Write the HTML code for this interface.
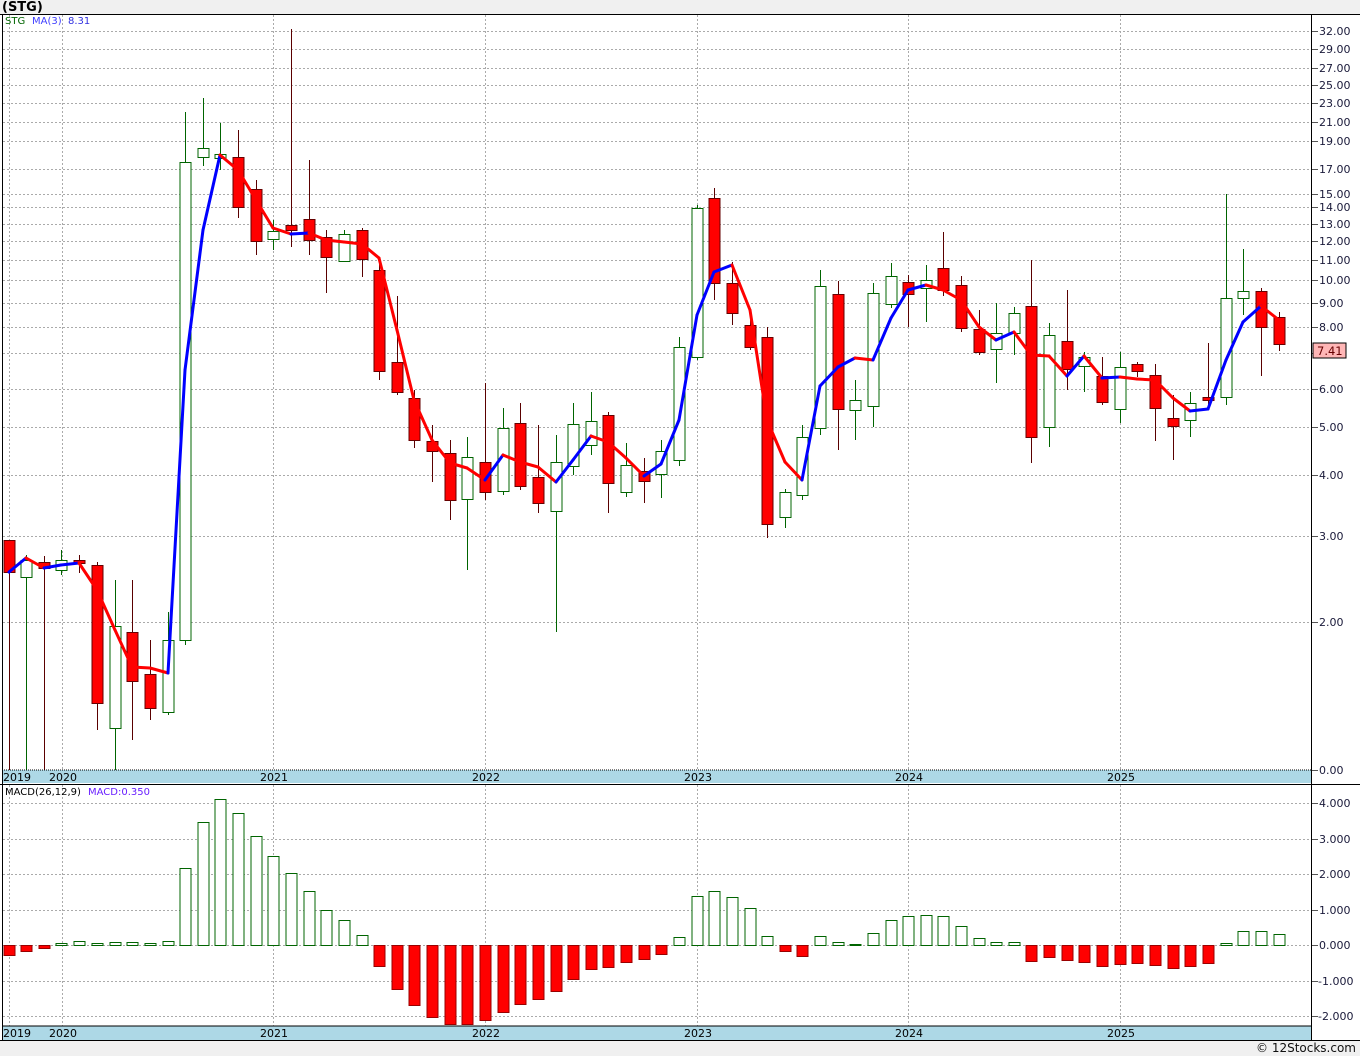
<!DOCTYPE html><html><head><meta charset="utf-8"><style>
body{margin:0;width:1360px;height:1056px;background:#f0f0f0;overflow:hidden;font-family:"Liberation Sans","DejaVu Sans",sans-serif}
svg{position:absolute;left:0;top:0}
text{font-family:"DejaVu Sans","Liberation Sans",sans-serif;font-size:11px}
</style></head><body>
<svg id="s" width="1360" height="1056" xmlns="http://www.w3.org/2000/svg">
<rect x="0" y="14" width="1360" height="1026" fill="#fff"/>
<text x="2" y="11" style="font-size:13px;font-weight:bold" fill="#000">(STG)</text>
<g id="grid" stroke="#aaa" stroke-dasharray="2,2" stroke-width="1"></g>
<g id="candles"></g>
<g id="ma"></g>
<g id="macd"></g>
<rect x="2" y="770" width="1309" height="13" fill="#add8e6"/>
<line x1="2" y1="770" x2="1311" y2="770" stroke="#000" stroke-dasharray="1,1"/>
<rect x="2" y="1026" width="1309" height="14" fill="#add8e6"/>
<line x1="2" y1="1026" x2="1311" y2="1026" stroke="#000"/>
<g fill="#000" style="font-size:11px">
<text x="3" y="781">2019</text><text x="49" y="781">2020</text><text x="260" y="781">2021</text><text x="472" y="781">2022</text><text x="684" y="781">2023</text><text x="895" y="781">2024</text><text x="1107" y="781">2025</text>
<text x="3" y="1037">2019</text><text x="49" y="1037">2020</text><text x="260" y="1037">2021</text><text x="472" y="1037">2022</text><text x="684" y="1037">2023</text><text x="895" y="1037">2024</text><text x="1107" y="1037">2025</text>
</g>
<text x="5" y="24" fill="#006400" style="font-size:10px">STG</text>
<text x="32" y="24" fill="#4040ff" style="font-size:10px">MA(3)</text>
<text x="68" y="24" fill="#3030e0" style="font-size:10px">8.31</text>
<text x="5" y="795" fill="#000" style="font-size:10px">MACD(26,12,9)</text>
<text x="88" y="795" fill="#6a20ff" style="font-size:10px">MACD:0.350</text>
<line x1="1311.5" y1="14" x2="1311.5" y2="1040" stroke="#000"/>
<line x1="0" y1="14.5" x2="1360" y2="14.5" stroke="#000"/>
<line x1="2.5" y1="14" x2="2.5" y2="1040" stroke="#000"/>
<line x1="0" y1="784.5" x2="1360" y2="784.5" stroke="#000"/>
<line x1="0" y1="1040.5" x2="1360" y2="1040.5" stroke="#000"/>
<g id="ticks" stroke="#555"></g>
<g id="lbl" fill="#1a1a3a" style="font-size:11.5px"></g>
<rect x="1313" y="343" width="33" height="15" fill="#ffb6b6" stroke="#000"/>
<text x="1317" y="355" fill="#600" style="font-size:11.5px">7.41</text>
<text x="1356" y="1052" text-anchor="end" fill="#111" style="font-size:12px">© 12Stocks.com</text>
</svg>
<script>
var NS="http://www.w3.org/2000/svg";
function el(p,t,a){var e=document.createElementNS(NS,t);for(var k in a)e.setAttribute(k,a[k]);document.getElementById(p).appendChild(e);return e;}
var prices=[[32,31],[29,49],[27,68],[25,85],[23,103],[21,122],[19,141],[17,169],[15,194],[14,207],[13,224],[12,241],[11,260],[10,280],[9,303],[8,327],[7,353],[6,389],[5,427],[4,475],[3,536],[2,622],[0,770]];
prices.forEach(function(p){el("grid","line",{x1:3,y1:p[1]+.5,x2:1311,y2:p[1]+.5});el("ticks","line",{x1:1312,y1:p[1]+.5,x2:1318,y2:p[1]+.5});
if(p[0]!=7)el("lbl","text",{x:1319,y:p[1]+4}).textContent=p[0].toFixed(2);});
var mac=[[4,803],[3,839],[2,874],[1,910],[0,945],[-1,981],[-2,1016]];
mac.forEach(function(p){el("grid","line",{x1:3,y1:p[1]+.5,x2:1311,y2:p[1]+.5});el("ticks","line",{x1:1312,y1:p[1]+.5,x2:1318,y2:p[1]+.5});
var t=el("lbl","text",{x:p[0]<0?1318:1319,y:p[1]+4});t.textContent=(p[0]<0?"":"")+p[0].toFixed(3);});
[9,62,273,485,697,908,1120].forEach(function(x){el("grid","line",{x1:x+.5,y1:15,x2:x+.5,y2:770});el("grid","line",{x1:x+.5,y1:785,x2:x+.5,y2:1026});});
// x, type(r/w), o,c (body top,bottom), hi, lo
var C=[[9,'r',540,572,540,770],[26,'w',560,577,555,770],[44,'r',562,568,556,770],[61,'w',560,570,550,575],[79,'r',560,563,555,573],[97,'r',565,703,562,730],[115,'w',626,728,580,770],[132,'r',632,681,580,740],[150,'r',674,708,640,720],[168,'w',640,712,612,715],[185,'w',162,640,112,645],[203,'w',148,157,98,166],[220,'w',154,158,123,170],[238,'r',157,207,130,218],[256,'r',189,241,180,255],[273,'w',231,239,220,250],[291,'r',225,230,29,247],[309,'r',219,240,160,255],[326,'r',237,257,230,293],[344,'w',234,261,230,262],[362,'r',230,259,228,277],[379,'r',270,371,258,380],[397,'r',362,392,296,395],[414,'r',398,440,390,448],[432,'r',441,451,425,482],[450,'r',453,500,440,520],[467,'w',457,499,437,570],[485,'r',462,492,383,500],[503,'w',428,491,408,495],[520,'r',423,486,403,490],[538,'r',477,503,425,513],[556,'w',462,511,435,632],[573,'w',424,466,403,475],[591,'w',421,445,392,455],[608,'r',415,483,412,513],[626,'w',465,492,443,497],[644,'r',471,481,458,503],[661,'w',451,474,440,498],[679,'w',347,460,337,466],[697,'w',208,357,205,360],[714,'r',198,283,188,300],[732,'r',283,313,262,325],[750,'r',325,347,316,350],[767,'r',337,524,327,538],[785,'w',492,517,489,528],[802,'w',437,495,425,500],[820,'w',286,428,270,435],[838,'r',294,409,281,450],[855,'w',400,410,380,440],[873,'w',293,406,283,427],[891,'w',276,304,263,308],[908,'r',282,294,275,327],[926,'w',280,288,265,322],[943,'r',268,290,232,296],[961,'r',285,328,276,332],[979,'r',329,352,310,355],[996,'w',333,349,303,383],[1014,'w',313,333,307,355],[1031,'r',306,437,260,463],[1049,'w',335,427,323,447],[1067,'r',341,369,290,390],[1084,'w',357,366,352,392],[1102,'r',376,402,357,405],[1120,'w',367,409,352,423],[1137,'r',364,371,362,377],[1155,'r',375,408,364,441],[1173,'r',418,426,395,460],[1190,'w',403,420,392,437],[1208,'r',397,400,343,405],[1226,'w',298,397,194,405],[1243,'w',291,298,249,315],[1261,'r',291,327,288,376],[1279,'r',317,344,312,351]];
C.forEach(function(c){var x=c[0],r=c[1]=='r',col=r?'#5a0000':'#006400';
el("candles","line",{x1:x+.5,y1:c[4],x2:x+.5,y2:c[5],stroke:col});
el("candles","rect",{x:x-5,y:c[2]+.5,width:11,height:Math.max(c[3]-c[2],2),fill:r?'#ff0000':'#fff',stroke:r?'#600':'#006400'});});
var M=[[9,572],[26,558],[44,568],[61,565],[79,563],[97,590],[115,630],[132,667],[150,668],[168,673],[185,370],[203,230],[220,155],[238,170],[256,200],[273,228],[291,234],[309,233],[326,240],[344,242],[362,244],[379,258],[397,330],[414,400],[432,440],[450,463],[467,468],[485,480],[503,455],[520,462],[538,467],[556,482],[573,460],[591,436],[608,442],[626,458],[644,476],[661,464],[679,420],[697,315],[714,272],[732,265],[750,310],[767,420],[785,462],[802,480],[820,386],[838,367],[855,358],[873,360],[891,318],[908,290],[926,285],[943,290],[961,300],[979,327],[996,340],[1014,332],[1031,355],[1049,356],[1067,376],[1084,356],[1102,378],[1120,377],[1137,379],[1155,380],[1173,398],[1190,411],[1208,409],[1226,360],[1243,322],[1261,306],[1279,320]];
for(var i=1;i<M.length;i++){var a=M[i-1],b=M[i];el("ma","line",{x1:a[0],y1:a[1],x2:b[0],y2:b[1],stroke:b[1]<a[1]?'#0000ff':'#ff0000','stroke-width':3,'stroke-linecap':'round'});}
var H=[[9,955],[26,951],[44,948],[61,943],[79,941],[97,943],[115,942],[132,942],[150,943],[168,941],[185,868],[203,822],[220,799],[238,813],[256,836],[273,856],[291,873],[309,891],[326,910],[344,920],[362,935],[379,966],[397,989],[414,1005],[432,1017],[450,1024],[467,1024],[485,1020],[503,1012],[520,1004],[538,999],[556,991],[573,979],[591,969],[608,967],[626,962],[644,959],[661,954],[679,937],[697,896],[714,891],[732,897],[750,908],[767,936],[785,951],[802,956],[820,936],[838,942],[855,944],[873,933],[891,920],[908,916],[926,915],[943,916],[961,926],[979,938],[996,942],[1014,942],[1031,961],[1049,957],[1067,960],[1084,962],[1102,966],[1120,964],[1137,963],[1155,965],[1173,968],[1190,966],[1208,963],[1226,943],[1243,931],[1261,931],[1279,934]];
H.forEach(function(h){var neg=h[1]>945;var y=neg?945:h[1],ht=Math.abs(h[1]-945)||1;
el("macd","rect",{x:h[0]-5,y:y+.5,width:11,height:ht,fill:neg?'#ff0000':'#fff',stroke:neg?'#900':'#006400'});});
</script>
</body></html>
